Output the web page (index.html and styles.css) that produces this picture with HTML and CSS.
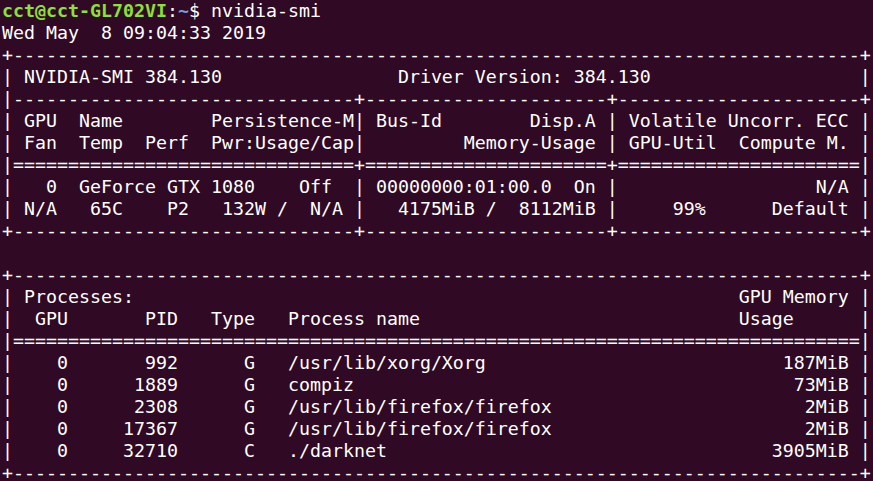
FILE: index.html
```html
<!DOCTYPE html>
<html lang="en">
<head>
    <meta charset="UTF-8">
    <title>Terminal</title>
    <link rel="stylesheet" href="styles.css">
</head>
<body>

    <!-- Terminal output -->
    <pre class="terminal"><span class="user">cct@cct-GL702VI</span>:<span class="path">~</span>$ nvidia-smi
Wed May  8 09:04:33 2019
+-----------------------------------------------------------------------------+
| NVIDIA-SMI 384.130                Driver Version: 384.130                   |
|-------------------------------+----------------------+----------------------+
| GPU  Name        Persistence-M| Bus-Id        Disp.A | Volatile Uncorr. ECC |
| Fan  Temp  Perf  Pwr:Usage/Cap|         Memory-Usage | GPU-Util  Compute M. |
|===============================+======================+======================|
|   0  GeForce GTX 1080    Off  | 00000000:01:00.0  On |                  N/A |
| N/A   65C    P2   132W /  N/A |   4175MiB /  8112MiB |     99%      Default |
+-------------------------------+----------------------+----------------------+

+-----------------------------------------------------------------------------+
| Processes:                                                       GPU Memory |
|  GPU       PID   Type   Process name                             Usage      |
|=============================================================================|
|    0       992      G   /usr/lib/xorg/Xorg                           187MiB |
|    0      1889      G   compiz                                        73MiB |
|    0      2308      G   /usr/lib/firefox/firefox                       2MiB |
|    0     17367      G   /usr/lib/firefox/firefox                       2MiB |
|    0     32710      C   ./darknet                                   3905MiB |
+-----------------------------------------------------------------------------+</pre>

</body>
</html>
```

FILE: styles.css
```css
* {
    box-sizing: border-box;
    margin: 0;
    padding: 0;
}

html,
body {
    background-color: #300a24;
    height: 100%;
    overflow: hidden;
}

/* Terminal text */
.terminal {
    font-family: 'DejaVu Sans Mono', monospace;
    font-size: 18.27px;
    line-height: 22px;
    color: #ffffff;
    padding: 0 0 0 2px;
    white-space: pre;
}

.user {
    color: #8ae234;
    font-weight: bold;
}

.path {
    color: #729fcf;
    font-weight: bold;
}
```
